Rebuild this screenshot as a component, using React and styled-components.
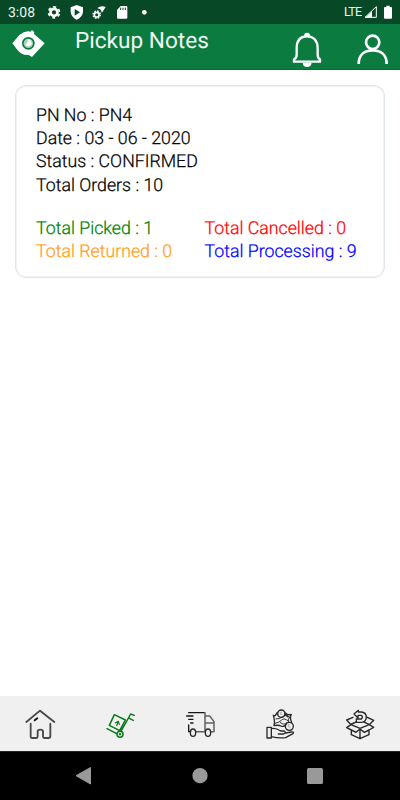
import React from "react";
import styled, { createGlobalStyle } from "styled-components";

const Global = createGlobalStyle`
  * { box-sizing: border-box; }
  body { margin: 0; background: #fff; }
`;
const Screen = styled.div`
  display: flex;
  flex-direction: column;
  width: 400px;
  height: 800px;
  overflow: hidden;
  background: #fff;
  font-family: Roboto, "Liberation Sans", sans-serif;
  text-rendering: geometricPrecision;
`;
const StatusBar = styled.div`
  display: flex;
  align-items: center;
  height: 24px;
  flex: none;
  padding-left: 8px;
  background: #074826;
  color: #eef5f0;
`;
const Clock = styled.span`
  width: 36px;
  font-size: 14px;
  line-height: 24px;
  padding-top: 1px;
`;
const Network = styled.span`
  margin-left: auto;
  width: 19px;
  font-size: 12.5px;
  line-height: 24px;
  letter-spacing: -0.7px;
  padding-top: 1px;
`;
const Glyph = styled.svg`
  display: block;
  flex: none;
`;
const Header = styled.header`
  display: flex;
  height: 46px;
  flex: none;
  background: #0b7b40;
  border-bottom: 1px solid #087319;
  color: #fff;
`;
const Title = styled.h1`
  flex: 1;
  margin: 0;
  padding-left: 15px;
  font-size: 22.6px;
  font-weight: 400;
  line-height: 34px;
  color: #f0f6f1;
  white-space: nowrap;
`;
const Content = styled.main`
  flex: 1;
  padding: 15px;
`;
const Card = styled.section`
  height: 193px;
  padding: 18.6px 0 0 20px;
  border: 1px solid #e0e5ec;
  box-shadow: inset 0 0 0 1px #f0f3f6;
  border-radius: 11px;
`;
const Line = styled.div`
  height: 23.4px;
  font-size: 17.75px;
  font-weight: 300;
  -webkit-text-stroke: 0.25px currentColor;
  line-height: 23.4px;
  white-space: nowrap;
  color: ${(p) => p.$color || "#000"};
`;
const Totals = styled.div`
  display: grid;
  grid-template-columns: 168.5px 1fr;
  margin-top: 19.5px;
`;
const Tabs = styled.nav`
  display: grid;
  grid-template-columns: repeat(5, 1fr);
  height: 55px;
  flex: none;
  padding-top: 4px;
  background: #f0f0f0;
`;
const Tab = styled.a`
  display: flex;
  justify-content: center;
  color: ${(p) => (p.$active ? "#087a18" : "#292929")};
`;
const SystemBar = styled.div`
  display: flex;
  height: 49px;
  flex: none;
  background: #000;
  border-top: 1px solid #222;
`;

const StatusIcon = ({ x, w, children }) => (
  <Glyph width={w} height="24" viewBox={`${x * 3} 0 ${w * 3} 72`} fill="#fff">{children}</Glyph>
);
const TabIcon = ({ children, sw = 4 }) => (
  <Glyph width="50" height="50" viewBox="0 0 150 150" fill="none" stroke="currentColor" strokeWidth={sw} strokeLinejoin="round" strokeLinecap="round">
    {children}
  </Glyph>
);

const Home = () => (
  <TabIcon sw={5.5}>
    <g stroke="#484848">
      <path d="M34 66L75 32 118 66M47 71V110Q47 114 52 114H64Q68 114 68 109V94Q68 89 76 89 84 89 84 94V109Q84 114 88 114H100Q106 114 106 109V71" />
      <path d="M59 61L67 55" stroke="#111" />
    </g>
  </TabIcon>
);
const Trolley = () => (
  <TabIcon sw={4.5}>
    <path d="M58 44L91 60 74 92 43 76ZM36 86L65 101M79 92L107 42 118 46M103 55L115 61" />
    <circle cx="75" cy="103" r="9" /><circle cx="75" cy="103" r="1.5" />
    <path d="M65 77L70 64M61 69L70 64 73 73" strokeWidth="3.5" />
  </TabIcon>
);
const Truck = () => (
  <TabIcon>
    <path d="M41 38H88M35 48H54M41 58H54M47 69H54M41 75V95H47" stroke="#151515" />
    <path d="M90 38V95H62M90 48H104L117 65V95H107M91 69H116" stroke="#606060" strokeWidth="4.5" />
    <ellipse cx="54" cy="98" rx="8" ry="11" /><ellipse cx="99" cy="98" rx="8" ry="11" />
  </TabIcon>
);
const Cash = () => (
  <TabIcon>
    <path d="M36 82H49V114H36ZM49 86C61 83 68 87 77 93H88Q94 98 86 102H70M49 110Q70 115 92 113L114 101Q119 95 109 96L92 99" />
    <path d="M67 37Q60 51 55 46C59 59 60 67 57 77Q71 74 78 78C86 82 94 76 95 69M91 39Q99 47 109 43Q103 53 110 67M89 42Q97 48 99 51" />
    <circle cx="79" cy="41" r="11" /><circle cx="103" cy="79" r="12" />
    <path d="M63 57Q76 57 83 50T104 51Q99 57 100 65M61 70Q74 67 80 60T99 62M76 68Q85 75 92 72" strokeWidth="2.8" />
    <path d="M80 37H76V43H81M104 74H100V81H106" stroke="#999" strokeWidth="2" />
  </TabIcon>
);
const ReturnBox = () => (
  <TabIcon sw={4.2}>
    <path d="M54 52L35 60 48 74 35 83 49 90V104L75 116 102 104V90L116 82 103 74 116 61 97 52M48 74L75 85 103 74M75 85V116M75 87L63 97 49 90M75 87L88 97 102 90M50 72L68 64M84 65L102 73" />
    <path d="M70 31L57 42 69 54V46H79Q85 50 79 57H64V67H80Q94 65 94 51 93 37 79 36H70Z" fill="#f0f0f0" />
  </TabIcon>
);

export default function App() {
  return (
    <Screen>
      <Global />
      <StatusBar>
        <Clock>3:08</Clock>
        <StatusIcon x={44} w={22}>
          <circle cx="162" cy="37" r="10.5" fill="none" stroke="#fff" strokeWidth="8" />
          <circle cx="162" cy="37" r="16.5" fill="none" stroke="#fff" strokeWidth="5" strokeDasharray="9 8.28" strokeDashoffset="13" />
        </StatusIcon>
        <StatusIcon x={66} w={24}>
          <path d="M230 15L249 22V35Q248 51 230 59 213 51 212 35V22Z" />
          <path d="M224 27L240 37 224 47Z" fill="#074826" />
        </StatusIcon>
        <StatusIcon x={90} w={22}>
          <circle cx="290" cy="44" r="7" fill="none" stroke="#fff" strokeWidth="5" />
          <circle cx="290" cy="44" r="11" fill="none" stroke="#fff" strokeWidth="4" strokeDasharray="5 3.64" />
          <path d="M292 24Q304 15 317 21L306 38 302 29Z" />
        </StatusIcon>
        <StatusIcon x={112} w={40}>
          <path d="M362 18H379Q382 18 382 22V53Q382 56 378 56H354Q351 56 351 53V30Z" />
          <path d="M362 23V30M369 23V30M376 23V30" stroke="#074826" strokeWidth="3" />
          <circle cx="433" cy="37" r="7" />
        </StatusIcon>
        <Network>LTE</Network>
        <Glyph width="37" height="24" viewBox="249 0 111 72" fill="#fff">
          <path d="M255 52L289 20V52Z" fill="none" stroke="#fff" strokeWidth="3" />
          <path d="M255 53L276 34V53Z" />
          <path d="M319 17H329V21H334Q336 21 336 24V53Q336 56 333 56H315Q312 56 312 53V24Q312 21 315 21H319Z" />
        </Glyph>
      </StatusBar>
      <Header>
        <Glyph width="60" height="46" viewBox="0 72 180 138">
          <path d="M37 130L58 105Q75 91 91 95L96 90 103 97 102 102 134 130 116 149 96 171 86 165Q65 167 53 151Z" fill="#fff" />
          <circle cx="85" cy="130" r="19" fill="#0b7b40" />
          <circle cx="85" cy="130" r="14" fill="#a9d4bc" />
          <path d="M83 118V126L77 134A10 10 0 1 0 88 119Z" fill="#fff" />
        </Glyph>
        <Title>Pickup Notes</Title>
        <Glyph width="60" height="46" viewBox="0 72 180 138" fill="none" stroke="#fff" strokeWidth="7">
          <path d="M42 185V178Q50 174 50 164V145C50 121 62 109 81 109S113 121 113 145V164Q113 174 120 178V185Z" strokeLinejoin="round" />
          <path d="M72 108Q72 98 81 98T91 108ZM68 188H95Q93 201 81 201T68 188Z" fill="#fff" stroke="none" />
        </Glyph>
        <Glyph width="60" height="46" viewBox="180 72 180 138" fill="none" stroke="#fff" strokeWidth="8">
          <circle cx="278" cy="127" r="20" />
          <path d="M236 192C236 164 254 151 278 151S320 164 320 192" />
        </Glyph>
      </Header>
      <Content>
        <Card>
          <Line>PN No : PN4</Line>
          <Line>Date : 03 - 06 - 2020</Line>
          <Line>Status : CONFIRMED</Line>
          <Line>Total Orders : 10</Line>
          <Totals>
            <Line $color="#008000">Total Picked : 1</Line>
            <Line $color="#ff0000">Total Cancelled : 0</Line>
            <Line $color="#ffa01a">Total Returned : 0</Line>
            <Line $color="#0000ff">Total Processing : 9</Line>
          </Totals>
        </Card>
      </Content>
      <Tabs>
        <Tab><Home /></Tab>
        <Tab $active><Trolley /></Tab>
        <Tab><Truck /></Tab>
        <Tab><Cash /></Tab>
        <Tab><ReturnBox /></Tab>
      </Tabs>
      <SystemBar>
        <Glyph width="400" height="48" viewBox="0 0 400 48" fill="#999">
          <path d="M76 23.7L90.5 15.5V32Z" stroke="#999" strokeLinejoin="round" />
          <circle cx="200" cy="23.7" r="7.6" />
          <rect x="307" y="16" width="16" height="16" rx="1.5" />
        </Glyph>
      </SystemBar>
    </Screen>
  );
}
